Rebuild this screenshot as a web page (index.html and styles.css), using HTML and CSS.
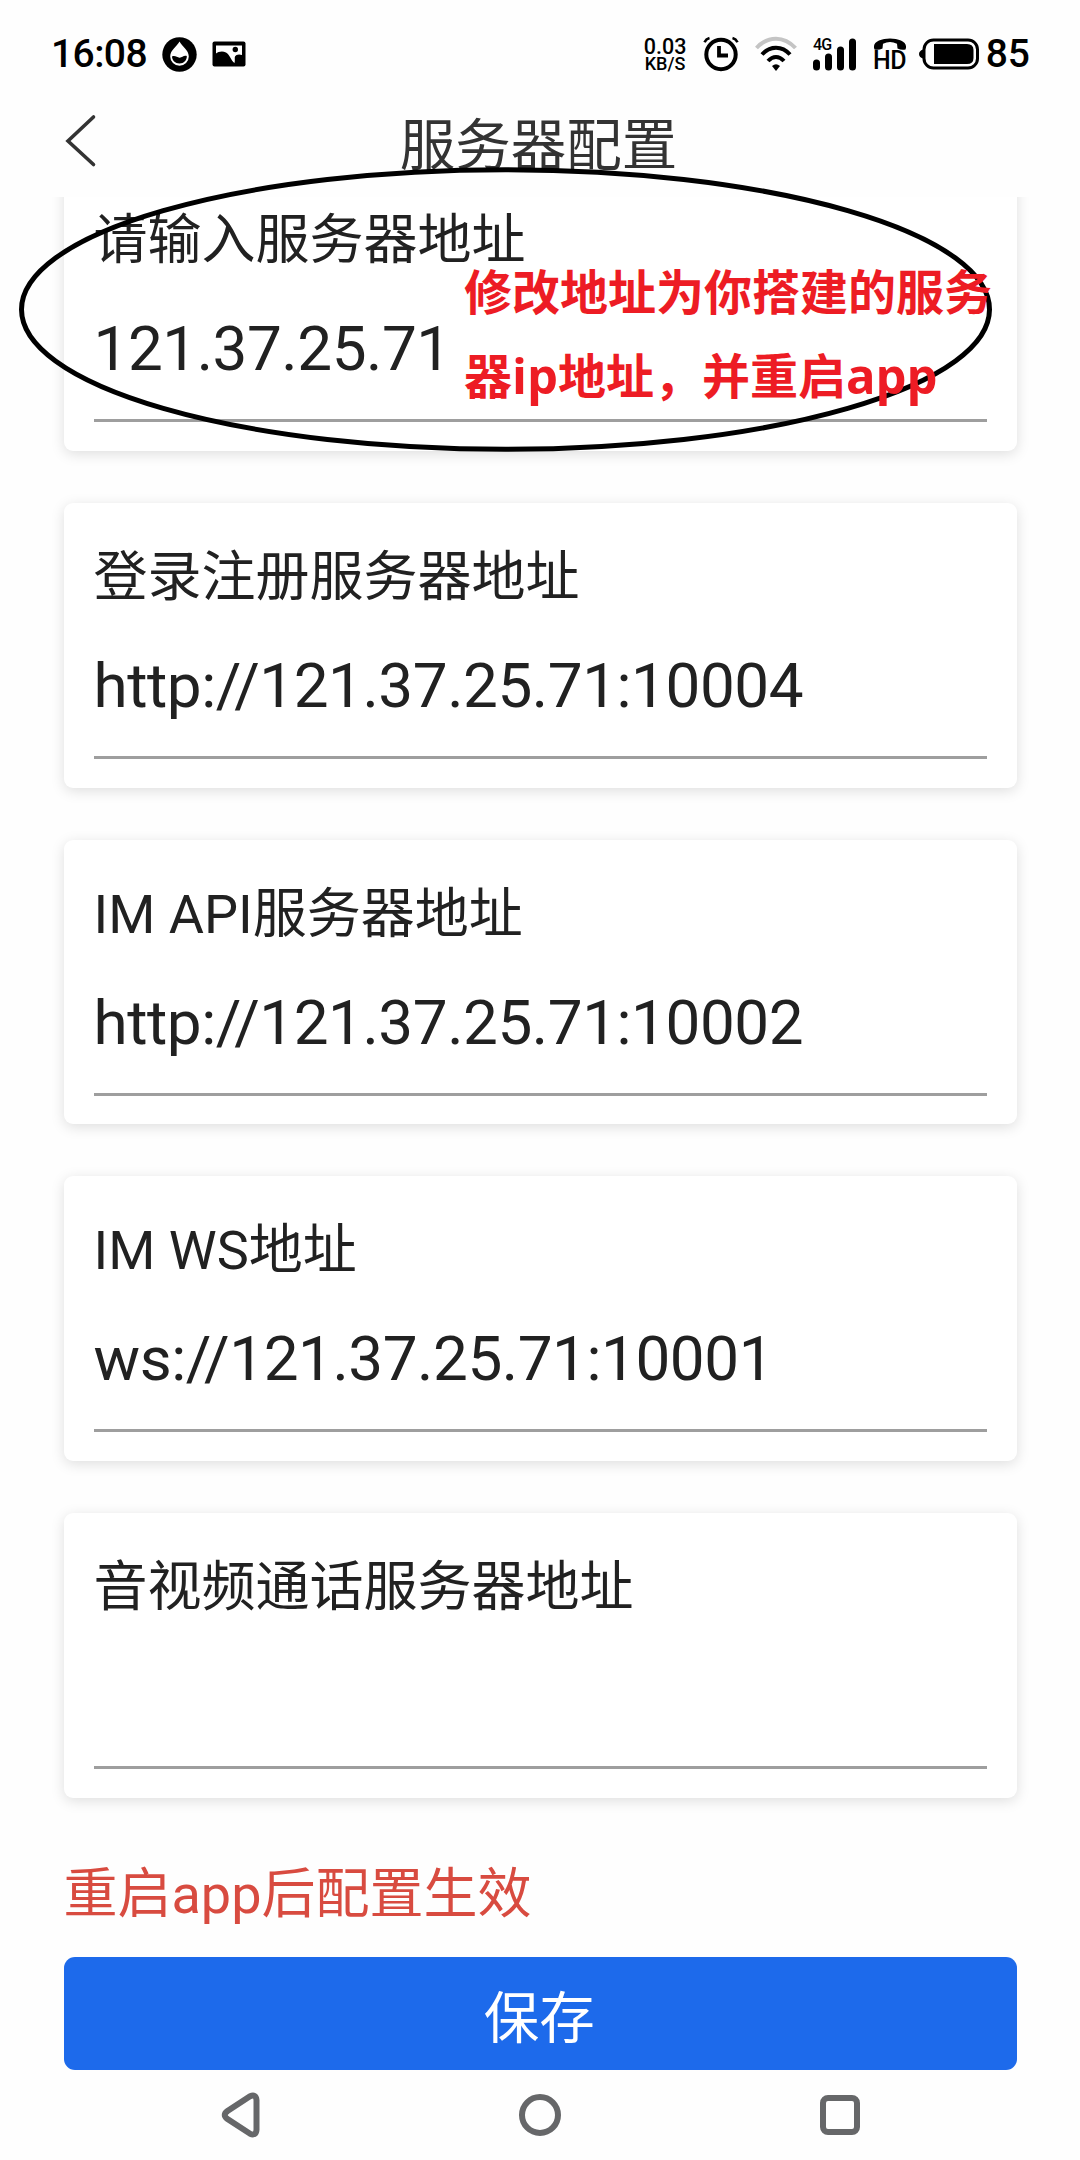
FILE: index.html
```html
<!DOCTYPE html>
<html lang="zh-CN">
<head>
<meta charset="utf-8">
<title>服务器配置</title>
<link rel="stylesheet" href="styles.css">
</head>
<body>
<div class="phone">
  <div class="status">
    <span class="clock">16:08</span>
    <svg class="ic-drop" width="35" height="35" viewBox="0 0 35 35"><circle cx="17.5" cy="17.5" r="17.2"/><path d="M17.5 4.5C15 9.500 8.200 13 8.200 19.500a9.300 9.300 0 0 0 18.600 0C26.800 13 20 9.500 17.500 4.500z" fill="#fff"/><path d="M10 19.500c3-1.500 5 1 7.500 1.200s4-2.700 7.300-1.700c.3 4-3 7.500-7.300 7.500s-7.300-3-7.500-7z"/></svg>
    <svg class="ic-pic" width="34" height="26" viewBox="0 0 34 26"><rect x=".5" y=".5" width="33" height="25" rx="2"/><path d="M4 4.500h26v9.500c-3-1.200-6-.5-7 1.500-.7 1.800.3 3.500-.5 6.500C19 20 18 13.500 14 11.500c-4-1.800-8-.5-10 1z" fill="#fff"/><circle cx="23.300" cy="8.500" r="2.700"/></svg>
    <div class="speed"><span>0.03</span><span class="unit">KB/S</span></div>
    <svg class="ic-alarm" width="36" height="36" viewBox="0 0 36 36"><g fill="none" stroke="#000"><circle cx="18" cy="18.500" r="14.700" stroke-width="4"/><path d="M16 10v9.500h9" stroke-width="3.800"/><path d="M1.500 6.200Q3 3 6.500 2M34.500 6.200Q33 3 29.500 2" stroke-width="2.600"/></g></svg>
    <svg class="ic-wifi" width="42" height="36" viewBox="0 0 42 36"><g fill="none" stroke-width="4"><path d="M1.500 12C13-.5 29-.5 40.500 12" stroke="#c4c4c4"/><path d="M7 18.500C15 9.500 27 9.500 35 18.500M13 25c5-5.500 11-5.500 16 0" stroke="#000"/></g><path d="M17 30q4-3.500 8 0l-4 5z"/></svg>
    <div class="cell"><span class="gen">4G</span><svg class="ic-bars" width="44" height="34" viewBox="0 0 44 34"><rect x="0" y="22.500" width="7" height="11" rx="3.500"/><rect x="12" y="16.500" width="7" height="17" rx="3.500"/><rect x="24" y="9.500" width="7" height="24" rx="3.500"/><rect x="36" y="1.500" width="7" height="32" rx="3.500"/></svg></div>
    <div class="hd"><svg width="34" height="14" viewBox="0 0 34 14"><path d="M1.500 11.500C-1.500 4 8 .5 17 .5s18.500 3.500 15.500 11q-4 1-8-1L24 5.800Q17 2 10 5.800L9.500 10.500q-4 2-8 1z"/></svg><span>HD</span></div>
    <svg class="ic-batt" width="60" height="32" viewBox="0 0 60 32"><rect x="5" y="2" width="53.500" height="28" rx="9.500" fill="none" stroke="#000" stroke-width="3"/><path d="M4 11.500Q0 13 0 16t4 4.500zM15 6h33q6.500 0 6.500 6v8q0 6-6.500 6H15z"/></svg>
    <span class="level">85</span>
  </div>
  <div class="header">
    <svg class="back" width="34" height="54" viewBox="0 0 34 54"><path d="M30.500 3 5 27l25.500 23.500" fill="none" stroke="#333" stroke-width="3.600" stroke-linecap="round"/></svg>
    <div class="title">服务器配置</div>
  </div>
  <div class="list">
    <div class="card"><div class="label">请输入服务器地址</div><div class="value">121.37.25.71</div></div>
    <div class="card"><div class="label">登录注册服务器地址</div><div class="value">http://121.37.25.71:10004</div></div>
    <div class="card"><div class="label">IM API服务器地址</div><div class="value">http://121.37.25.71:10002</div></div>
    <div class="card"><div class="label">IM WS地址</div><div class="value">ws://121.37.25.71:10001</div></div>
    <div class="card"><div class="label">音视频通话服务器地址</div><div class="value"></div></div>
    <div class="tip">重启app后配置生效</div>
    <div class="save">保存</div>
  </div>
  <div class="nav">
    <svg width="44" height="48" viewBox="0 0 44 48"><path d="M32 5.300 9.500 20q-5.500 4 0 8L32 42.700q6 2.500 6.500-4V9.300q-.5-6.500-6.500-4z" fill="none" stroke="#666769" stroke-width="6"/></svg>
    <svg width="44" height="48" viewBox="0 0 44 48"><circle cx="22" cy="24" r="18" fill="none" stroke="#666769" stroke-width="6"/></svg>
    <svg width="44" height="48" viewBox="0 0 44 48"><rect x="5" y="7" width="34" height="34" rx="5" fill="none" stroke="#666769" stroke-width="6"/></svg>
  </div>
  <svg class="ring" width="973" height="285" viewBox="0 0 973 285"><ellipse cx="486.500" cy="142.500" rx="484" ry="139.800" fill="none" stroke="#000" stroke-width="5"/></svg>
  <div class="note">修改地址为你搭建的服务<br>器<span class="latin">ip</span>地址，并重启<span class="latin">app</span></div>
</div>
</body>
</html>
```
FILE: styles.css
```css
* { box-sizing: border-box; }
body { margin: 0; background: #fff; }
.phone {
  position: relative;
  width: 1080px;
  height: 2160px;
  overflow: hidden;
  display: flex;
  flex-direction: column;
  background: #fefefe;
  color: #212121;
  font-family: Roboto, "Noto Sans CJK SC", sans-serif;
}
.phone svg { display: block; flex: none; }
.status {
  flex: none;
  height: 108px;
  display: flex;
  align-items: center;
  padding: 0 50px 0 51px;
  color: #000;
}
.clock { width: 112px; font-size: 39px; font-weight: 500; letter-spacing: -.6px; white-space: nowrap; }
.ic-pic { margin-left: 15px; }
.speed {
  width: 46px;
  margin-left: 396px;
  display: flex;
  flex-direction: column;
  align-items: center;
  padding-top: 1px;
  font-size: 21.500px;
  font-weight: 500;
  line-height: 19px;
}
.unit { font-size: 18px; line-height: 16px; }
.ic-alarm { margin-left: 15px; }
.ic-wifi { margin-left: 16px; }
.cell { position: relative; margin-left: 16px; }
.gen { position: absolute; left: 0; top: 0; font-size: 16px; font-weight: 500; line-height: 16px; letter-spacing: -.8px; }
.hd { width: 35px; margin-left: 16px; display: flex; flex-direction: column; font-size: 25px; font-weight: 500; line-height: 18px; letter-spacing: -.5px; }
.ic-batt { margin-left: 11px; }
.level { margin-left: 7px; font-size: 39px; font-weight: 500; }
.header {
  flex: none;
  height: 89px;
  display: flex;
  align-items: flex-start;
  padding: 6px 66px 0 63px;
}
.title {
  flex: 1;
  padding: 3px 34px 0 0;
  text-align: center;
  font-size: 55.500px;
  line-height: 60px;
  color: #333;
}
.list {
  flex: none;
  height: 1880px;
  overflow: hidden;
  padding: 0 63px 0 63.500px;
  display: flex;
  flex-direction: column;
  gap: 52px;
}
.card {
  flex: none;
  height: 284.750px;
  padding: 37px 30px 29px;
  border-radius: 9px;
  background: #fff;
  box-shadow: 0 3px 14px rgba(0, 0, 0, .13);
}
.card:first-child { margin-top: -31px; }
.label { height: 76px; font-size: 54px; line-height: 76px; }
.value { height: 143px; border-bottom: 3px solid #9e9e9e; font-size: 62px; line-height: 139px; letter-spacing: -.45px; }
.tip { margin-top: 7.500px; height: 76px; font-size: 54px; line-height: 76px; color: #d84b40; }
.save {
  flex: none;
  height: 113px;
  margin-top: -28.500px;
  border-radius: 11px;
  background: #1d6aeb;
  color: #fff;
  font-size: 55.500px;
  line-height: 125px;
  text-align: center;
  text-indent: -2px;
}
.nav { flex: none; height: 76px; display: flex; align-items: center; gap: 256px; padding-left: 218px; }
.ring { position: absolute; left: 19px; top: 167px; }
.note {
  position: absolute;
  left: 464px;
  top: 250px;
  color: #ed1c24;
  font: bold 48px/84px "Open Sans", "Noto Sans CJK SC", sans-serif;
  white-space: nowrap;
}
.latin { font-size: 49px; line-height: 1; }
```
